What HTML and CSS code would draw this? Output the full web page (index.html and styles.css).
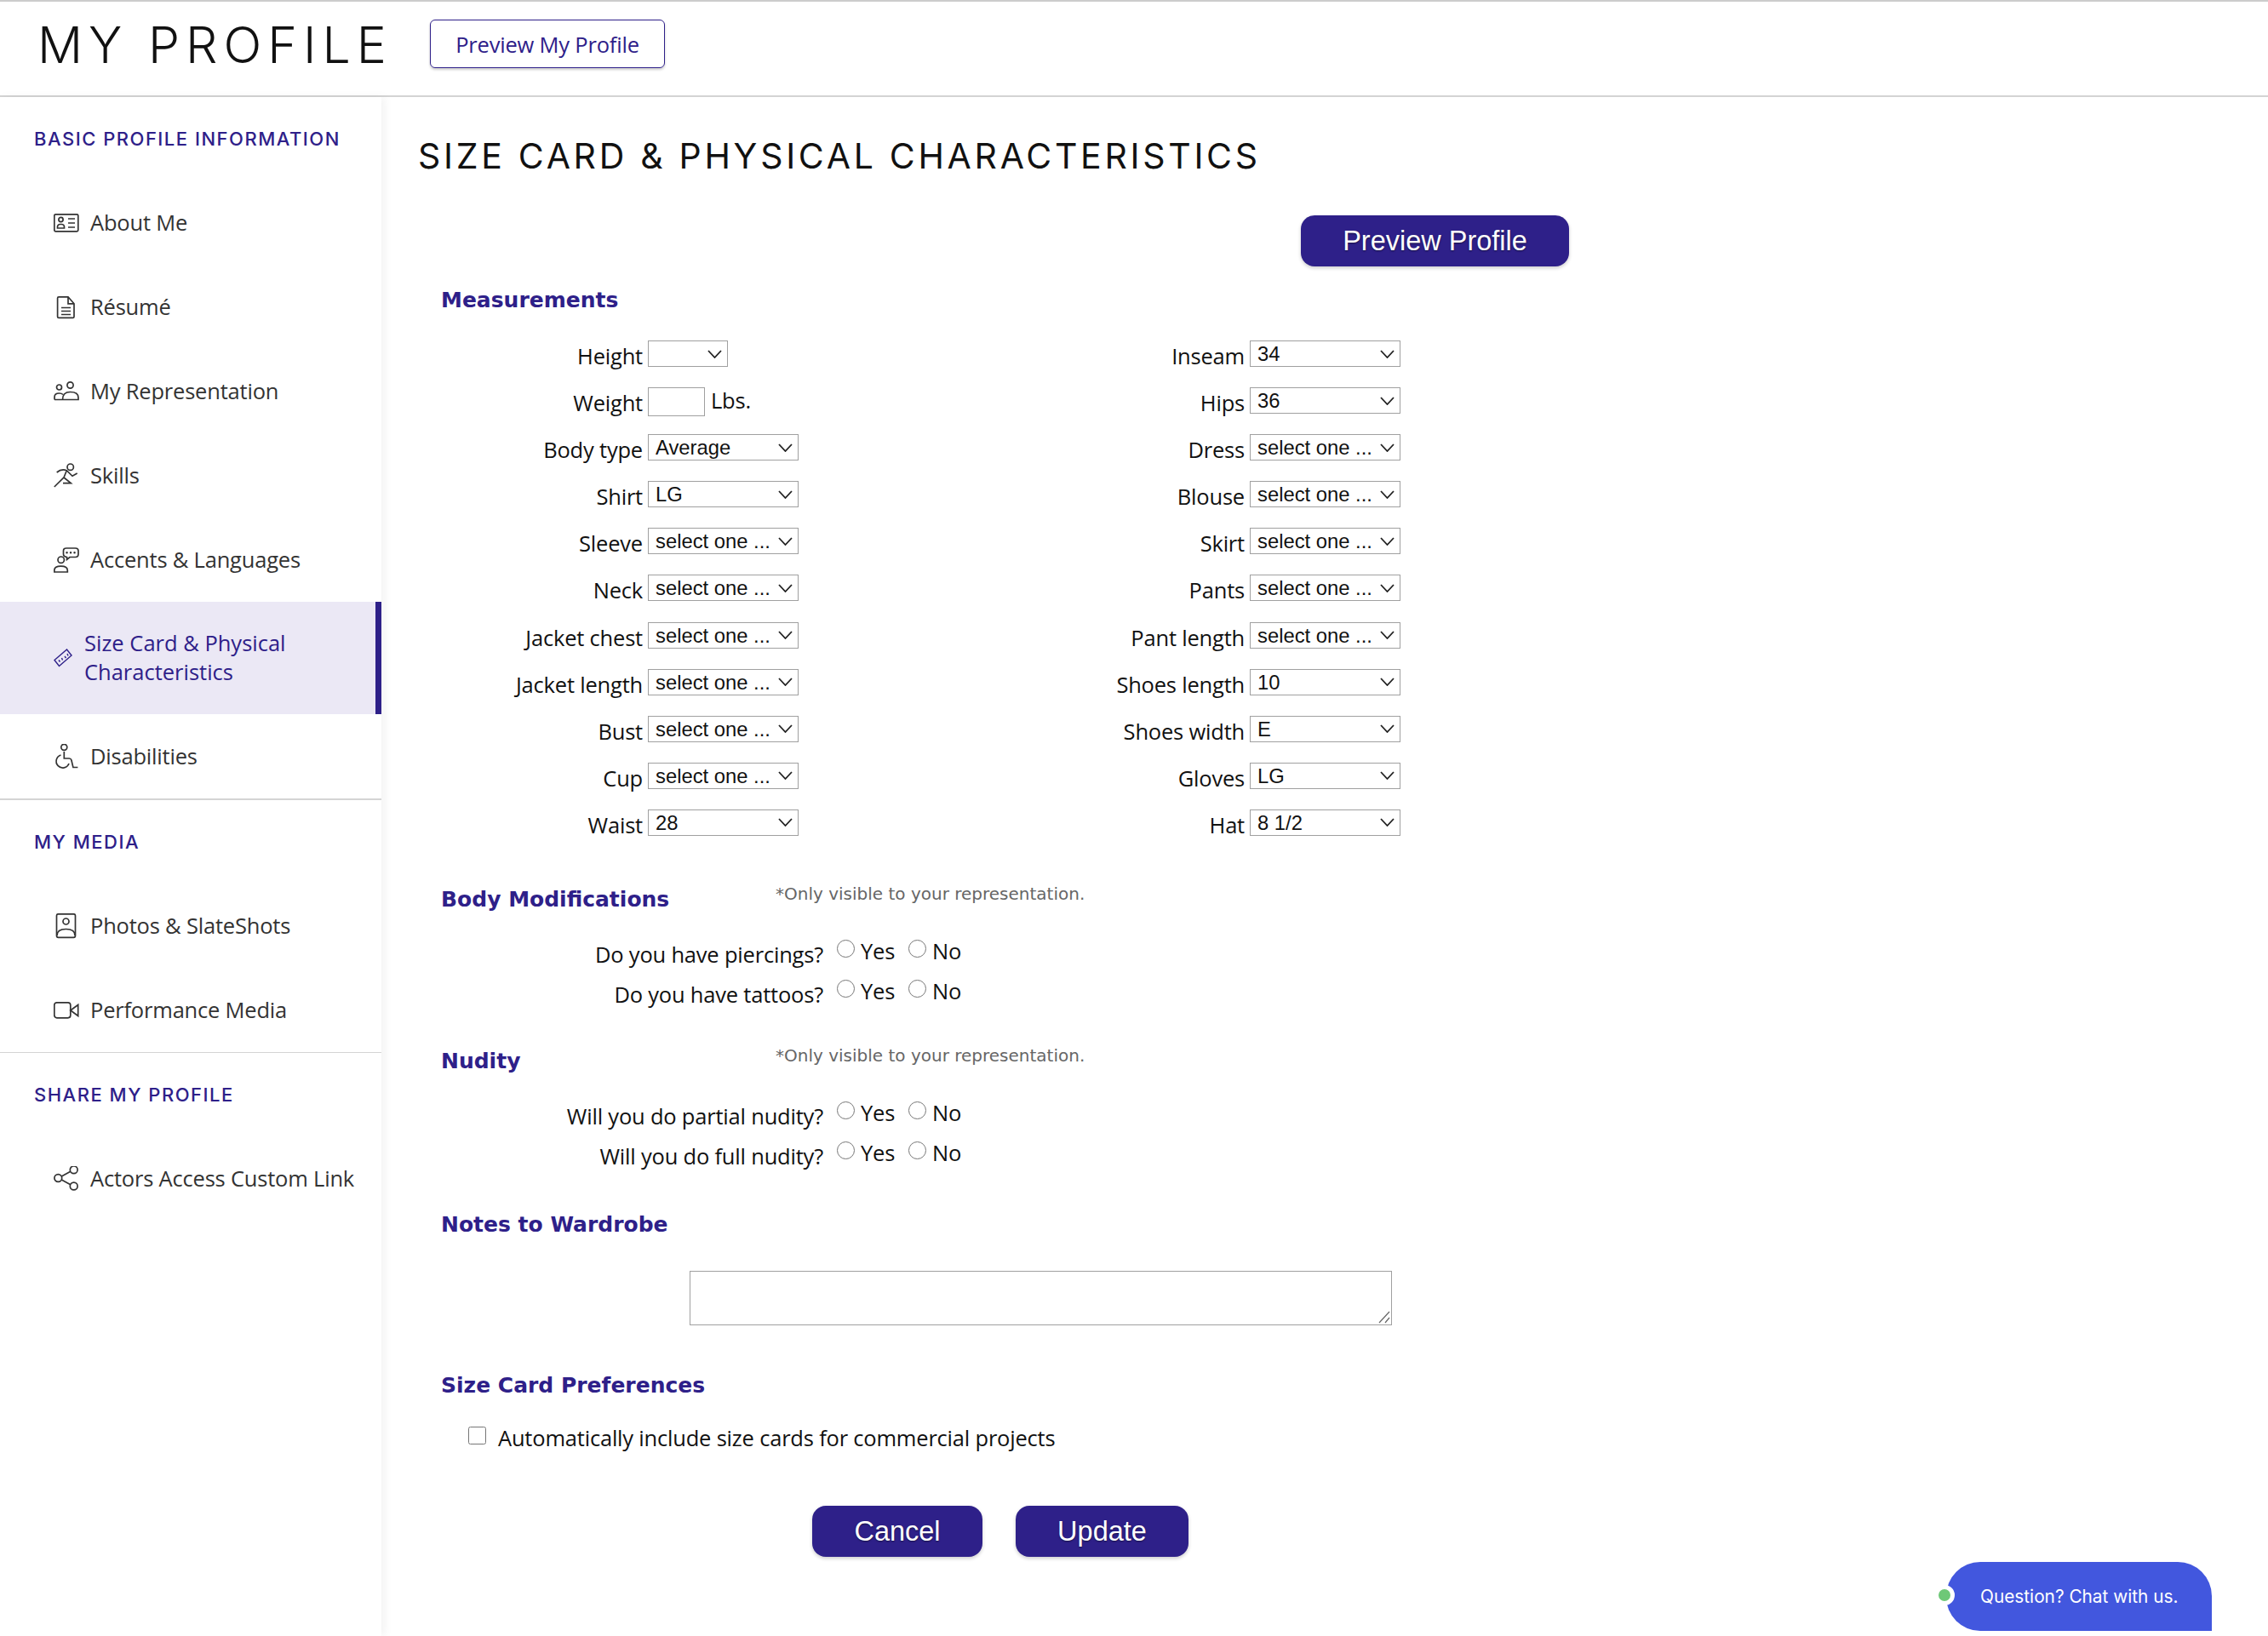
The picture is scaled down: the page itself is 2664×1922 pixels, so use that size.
FILE: index.html
```html
<!DOCTYPE html>
<html lang="en">
<head>
<meta charset="utf-8">
<title>My Profile</title>
<link rel="stylesheet" href="styles.css">
</head>
<body>
<header class="topbar">
  <div class="page-title">MY PROFILE</div>
  <a class="btn-outline">Preview My Profile</a>
</header>
<div class="layout">
  <nav class="sidebar">
    <div class="side-head">BASIC PROFILE INFORMATION</div>
    <a class="side-item"><svg class="ico" viewBox="0 0 30 30"><rect x="0.8" y="4.8" width="28" height="20" rx="1.5"/><circle cx="8.5" cy="11" r="2.6"/><path d="M4.5 21v-1.5a3 3 0 0 1 3-3h2a3 3 0 0 1 3 3V21zM17 10h8M17 15h8M17 20h8"/></svg><span>About Me</span></a>
    <a class="side-item"><svg class="ico" viewBox="0 0 30 30"><path d="M6 2.800h11l7 8V26a1.400 1.400 0 0 1-1.400 1.400H6A1.400 1.400 0 0 1 4.600 26V4.200A1.400 1.400 0 0 1 6 2.800zM17 2.800v8h7M9 15.500h11M9 19.500h11M9 23.500h11"/></svg><span>Résumé</span></a>
    <a class="side-item"><svg class="ico" viewBox="0 0 30 30"><circle cx="6.500" cy="10" r="3"/><circle cx="19.500" cy="7.500" r="3.600"/><path d="M1 24.500v-3q0-4.500 5.500-4.500 3 0 4.500 1.500M10.500 24.500q0-9 9-9 9.500 0 9.500 6.500v2.500zM1 24.500h9.500"/></svg><span>My Representation</span></a>
    <a class="side-item"><svg class="ico" viewBox="0 0 30 30"><circle cx="19.700" cy="4.700" r="3.700"/><path d="M3.700 11Q9 6.500 15.300 8.700L22 15.300 27.700 12M.8 28L12 17 20.300 23.700H11M15.300 8.700L12 17"/></svg><span>Skills</span></a>
    <a class="side-item"><svg class="ico" viewBox="0 0 30 30"><circle cx="8.700" cy="14.700" r="3.700"/><path d="M.8 29v-1.800q0-5 7.700-5 7.800 0 7.800 5V29zM15 1h10.500q3.500 0 3.500 3v4q0 3.500-3.500 3.500H19l-3.500 3v-3Q11.500 11 11.500 8V4q0-3 3.500-3z"/><path class="dots" d="M15.500 6.300h.1M20 6.300h.1M24.500 6.300h.1"/></svg><span>Accents &amp; Languages</span></a>
    <a class="side-item side-item-active"><svg class="ico-sm" viewBox="0 0 22 22"><path d="M1 13.500L15.500 1 21 8 6.500 20.500zM6 13.500l1.500 2M9.500 11l1 2.500M13 9l1.500 2M16 6l1 2.500"/></svg><span>Size Card &amp; Physical<br>Characteristics</span></a>
    <a class="side-item"><svg class="ico" viewBox="0 0 30 30"><circle cx="12.300" cy="3.800" r="3.500"/><path d="M12.300 9v8h6q2 0 2.600 2l2 8.500h5.500M8.500 13A7.700 7.700 0 1 0 18 23"/></svg><span>Disabilities</span></a>
    <div class="side-rule"></div>
    <div class="side-head">MY MEDIA</div>
    <a class="side-item"><svg class="ico" viewBox="0 0 30 30"><rect x="3.500" y="0.800" width="22" height="27.500" rx="2"/><circle cx="14.500" cy="9.500" r="3.500"/><path d="M4 26q0-7.500 10.500-7.500T25 26"/></svg><span>Photos &amp; SlateShots</span></a>
    <a class="side-item"><svg class="ico" viewBox="0 0 30 30"><rect x="0.800" y="5.800" width="19" height="18" rx="3"/><path d="M19.800 15L28.700 8.500v13z"/></svg><span>Performance Media</span></a>
    <div class="side-rule side-rule-thin"></div>
    <div class="side-head">SHARE MY PROFILE</div>
    <a class="side-item"><svg class="ico" viewBox="0 0 30 30"><circle cx="5.300" cy="14" r="4.400"/><circle cx="23.700" cy="4.300" r="4.400"/><circle cx="23.700" cy="23.500" r="4.400"/><path d="M9.300 12l10.500-5.700M9.300 16l10.500 5.700"/></svg><span>Actors Access Custom Link</span></a>
  </nav>
  <main class="content">
    <h1 class="content-title">SIZE CARD &amp; PHYSICAL CHARACTERISTICS</h1>
    <div class="toolbar"><button class="btn-solid btn-preview" type="button">Preview Profile</button></div>
    <form class="form">
      <h2 class="sec-title">Measurements</h2>
      <div class="measures">
        <div class="mcol">
          <label>Height</label><div><select class="sel sel-short"><option></option></select></div>
          <label>Weight</label><div class="weight"><input class="txt" type="text"><span>Lbs.</span></div>
          <label>Body type</label><div><select class="sel"><option>Average</option></select></div>
          <label>Shirt</label><div><select class="sel"><option>LG</option></select></div>
          <label>Sleeve</label><div><select class="sel"><option>select one ...</option></select></div>
          <label>Neck</label><div><select class="sel"><option>select one ...</option></select></div>
          <label>Jacket chest</label><div><select class="sel"><option>select one ...</option></select></div>
          <label>Jacket length</label><div><select class="sel"><option>select one ...</option></select></div>
          <label>Bust</label><div><select class="sel"><option>select one ...</option></select></div>
          <label>Cup</label><div><select class="sel"><option>select one ...</option></select></div>
          <label>Waist</label><div><select class="sel"><option>28</option></select></div>
        </div>
        <div class="mcol">
          <label>Inseam</label><div><select class="sel"><option>34</option></select></div>
          <label>Hips</label><div><select class="sel"><option>36</option></select></div>
          <label>Dress</label><div><select class="sel"><option>select one ...</option></select></div>
          <label>Blouse</label><div><select class="sel"><option>select one ...</option></select></div>
          <label>Skirt</label><div><select class="sel"><option>select one ...</option></select></div>
          <label>Pants</label><div><select class="sel"><option>select one ...</option></select></div>
          <label>Pant length</label><div><select class="sel"><option>select one ...</option></select></div>
          <label>Shoes length</label><div><select class="sel"><option>10</option></select></div>
          <label>Shoes width</label><div><select class="sel"><option>E</option></select></div>
          <label>Gloves</label><div><select class="sel"><option>LG</option></select></div>
          <label>Hat</label><div><select class="sel"><option>8 1/2</option></select></div>
        </div>
      </div>

      <div class="sec-head sec-body">
        <h2 class="sec-title">Body Modifications</h2>
        <span class="note">*Only visible to your representation.</span>
      </div>
      <div class="yn-list">
        <div class="yn"><span class="yn-q">Do you have piercings?</span><input type="radio" name="p"><span class="yn-l">Yes</span><input type="radio" name="p"><span class="yn-l">No</span></div>
        <div class="yn"><span class="yn-q">Do you have tattoos?</span><input type="radio" name="t"><span class="yn-l">Yes</span><input type="radio" name="t"><span class="yn-l">No</span></div>
      </div>

      <div class="sec-head sec-nudity">
        <h2 class="sec-title">Nudity</h2>
        <span class="note">*Only visible to your representation.</span>
      </div>
      <div class="yn-list">
        <div class="yn"><span class="yn-q">Will you do partial nudity?</span><input type="radio" name="n1"><span class="yn-l">Yes</span><input type="radio" name="n1"><span class="yn-l">No</span></div>
        <div class="yn"><span class="yn-q">Will you do full nudity?</span><input type="radio" name="n2"><span class="yn-l">Yes</span><input type="radio" name="n2"><span class="yn-l">No</span></div>
      </div>

      <h2 class="sec-title sec-notes">Notes to Wardrobe</h2>
      <textarea class="notes"></textarea>

      <h2 class="sec-title sec-prefs">Size Card Preferences</h2>
      <div class="pref"><input type="checkbox"><span>Automatically include size cards for commercial projects</span></div>

      <div class="actions">
        <button class="btn-solid btn-cancel" type="button">Cancel</button>
        <button class="btn-solid btn-update" type="button">Update</button>
      </div>
    </form>
  </main>
</div>
<div class="chat">Question? Chat with us.<span class="chat-dot"></span></div>
</body>
</html>
```

FILE: styles.css
```css
* { box-sizing: border-box; }
html, body { margin: 0; padding: 0; }
body {
  width: 2664px;
  height: 1922px;
  overflow: hidden;
  background: #fff;
  color: #111;
  font-family: "Open Sans", "Liberation Sans", sans-serif;
  font-size: 25.500px;
  letter-spacing: -0.2px;
}
.topbar {
  height: 114px;
  border-top: 2px solid #ccc;
  border-bottom: 2px solid #d4d4d4;
  display: flex;
  align-items: flex-start;
  padding-left: 44px;
}
.page-title {
  font-family: "Inter", sans-serif;
  font-weight: 300;
  font-size: 59px;
  line-height: 72px;
  margin-top: 15px;
  letter-spacing: 7px;
  color: #111;
  width: 461px;
  white-space: nowrap;
}
.btn-outline {
  margin-top: 21px;
  width: 276px;
  height: 57px;
  border: 1.500px solid #2e2089;
  border-radius: 6px;
  color: #2e2089;
  display: flex;
  align-items: center;
  justify-content: center;
  box-shadow: 0 2px 3px rgba(0, 0, 0, .2);
}
.layout { display: flex; height: 1808px; }
.sidebar {
  width: 448px;
  flex: none;
  display: flex;
  flex-direction: column;
  box-shadow: 4px 0 10px rgba(0, 0, 0, .05);
  color: #333;
}
.side-head {
  height: 98px;
  flex: none;
  display: flex;
  align-items: center;
  padding-left: 40px;
  font-family: "Inter", sans-serif;
  font-size: 22px;
  font-weight: 500;
  color: #2e2089;
  letter-spacing: 1.500px;
}
.side-item {
  height: 99px;
  flex: none;
  display: flex;
  align-items: center;
  padding-left: 63px;
  gap: 13px;
  white-space: nowrap;
}
.side-item span { margin-top: -2px; }
.ico { width: 30px; height: 30px; flex: none; fill: none; stroke: #333; stroke-width: 1.700; }
.ico .dots { stroke-width: 2.400; stroke-linecap: round; }
.ico-sm { width: 22px; height: 22px; flex: none; fill: none; stroke: #2e2089; stroke-width: 1.400; }
.side-item-active {
  height: 132px;
  background: #ebe8f5;
  border-right: 7px solid #2e2089;
  color: #2e2089;
  line-height: 34px;
  letter-spacing: 0;
  gap: 14px;
}
.side-rule { height: 2px; background: #d4d4d4; flex: none; }
.side-rule-thin { height: 1px; }
.content { flex: 1; padding: 43px 0 0 43px; }
.content-title {
  margin: 0;
  font-family: "Inter", sans-serif;
  font-weight: 400;
  font-size: 41px;
  line-height: 52px;
  letter-spacing: 3.700px;
  color: #111;
  white-space: nowrap;
}
.toolbar { width: 1352px; margin-top: 44px; display: flex; justify-content: flex-end; }
.btn-solid {
  border: 0;
  border-radius: 16px;
  background: #2e2089;
  color: #fff;
  font-family: "Liberation Sans", sans-serif;
  font-size: 32.500px;
  height: 60px;
  padding: 0;
  text-shadow: 0 1px 2px rgba(0, 0, 0, .5);
  box-shadow: 0 2px 4px rgba(0, 0, 0, .2);
}
.btn-preview { width: 315px; }
.form { padding: 23px 0 0 27px; }
.sec-title {
  margin: 0;
  font-family: "DejaVu Sans", sans-serif;
  font-weight: 700;
  font-size: 25px;
  letter-spacing: 0;
  line-height: 34px;
  color: #2e2089;
  white-space: nowrap;
}
.measures { display: flex; margin-top: 30px; }
.mcol {
  width: 707px;
  display: grid;
  grid-template-columns: 237px auto;
  column-gap: 6px;
  grid-auto-rows: 55.100px;
  justify-content: start;
}
.mcol label { text-align: right; line-height: 36px; white-space: nowrap; }
.sel {
  appearance: none;
  width: 177px;
  height: 31px;
  border: 1px solid #a0a0a0;
  border-radius: 0;
  background: #fff url("data:image/svg+xml,%3Csvg xmlns='http://www.w3.org/2000/svg' viewBox='0 0 17 10'%3E%3Cpath d='M1 1l7.500 8L16 1' fill='none' stroke='%23222' stroke-width='1.800'/%3E%3C/svg%3E") no-repeat right 6px center / 17px 10px;
  color: #111;
  font-family: "Liberation Sans", sans-serif;
  font-size: 23.800px;
  letter-spacing: 0;
  padding: 0 0 0 8px;
  display: block;
}
.sel-short { width: 94px; }
.weight { display: flex; align-items: flex-start; }
.weight span { margin-left: 7px; line-height: 30px; }
.txt { width: 67px; height: 34px; border: 1px solid #a0a0a0; padding: 0; display: block; }
.sec-head { display: flex; align-items: flex-start; }
.sec-head .sec-title { width: 393px; flex: none; }
.sec-body { margin-top: 34px; }
.sec-nudity { margin-top: 44px; }
.sec-notes { margin-top: 46px; }
.note {
  margin-top: -4px;
  font-family: "DejaVu Sans", sans-serif;
  font-size: 20px;
  letter-spacing: 0;
  line-height: 28px;
  color: #666;
  white-space: nowrap;
}
.yn-list { margin-top: 28.500px; display: flex; flex-direction: column; gap: 11.500px; }
.yn { height: 36px; display: flex; align-items: flex-start; line-height: 36px; }
.yn-q { width: 449px; text-align: right; white-space: nowrap; }
.yn input { width: 21px; height: 21px; margin: 1px 0 0; flex: none; }
.yn input:first-of-type { margin-left: 16px; }
.yn-l { margin: -4px 0 0 7px; width: 56px; }
.notes {
  display: block;
  width: 825px;
  height: 64px;
  margin: 37px 0 0 292px;
  border: 1px solid #a0a0a0;
  border-radius: 0;
  resize: none;
  background: #fff url("data:image/svg+xml,%3Csvg xmlns='http://www.w3.org/2000/svg' viewBox='0 0 14 15'%3E%3Cpath d='M1 14L13 1M8 14l5-6' fill='none' stroke='%23666' stroke-width='1.200'/%3E%3C/svg%3E") no-repeat right 1px bottom 1px / 14px 15px;
}
.sec-prefs { margin-top: 53.500px; }
.pref { display: flex; align-items: center; margin: 26px 0 0 32px; height: 36px; }
.pref input { width: 21px; height: 21px; margin: -4px 14px 0 0; flex: none; }
.actions { display: flex; gap: 39px; margin: 62.500px 0 0 436px; }
.btn-cancel { width: 200px; }
.btn-update { width: 203px; }
.chat {
  position: fixed;
  left: 2286px;
  top: 1835px;
  width: 312px;
  height: 81px;
  background: #4257de;
  color: #fff;
  border-radius: 40px 40px 0 40px;
  font-family: "Inter", sans-serif;
  font-size: 20.800px;
  letter-spacing: 0;
  line-height: 81px;
  padding-left: 40px;
  white-space: nowrap;
}
.chat-dot {
  position: absolute;
  left: -14px;
  top: 27px;
  width: 24px;
  height: 24px;
  border-radius: 50%;
  background: #6ec877;
  border: 5px solid #fff;
}
```
